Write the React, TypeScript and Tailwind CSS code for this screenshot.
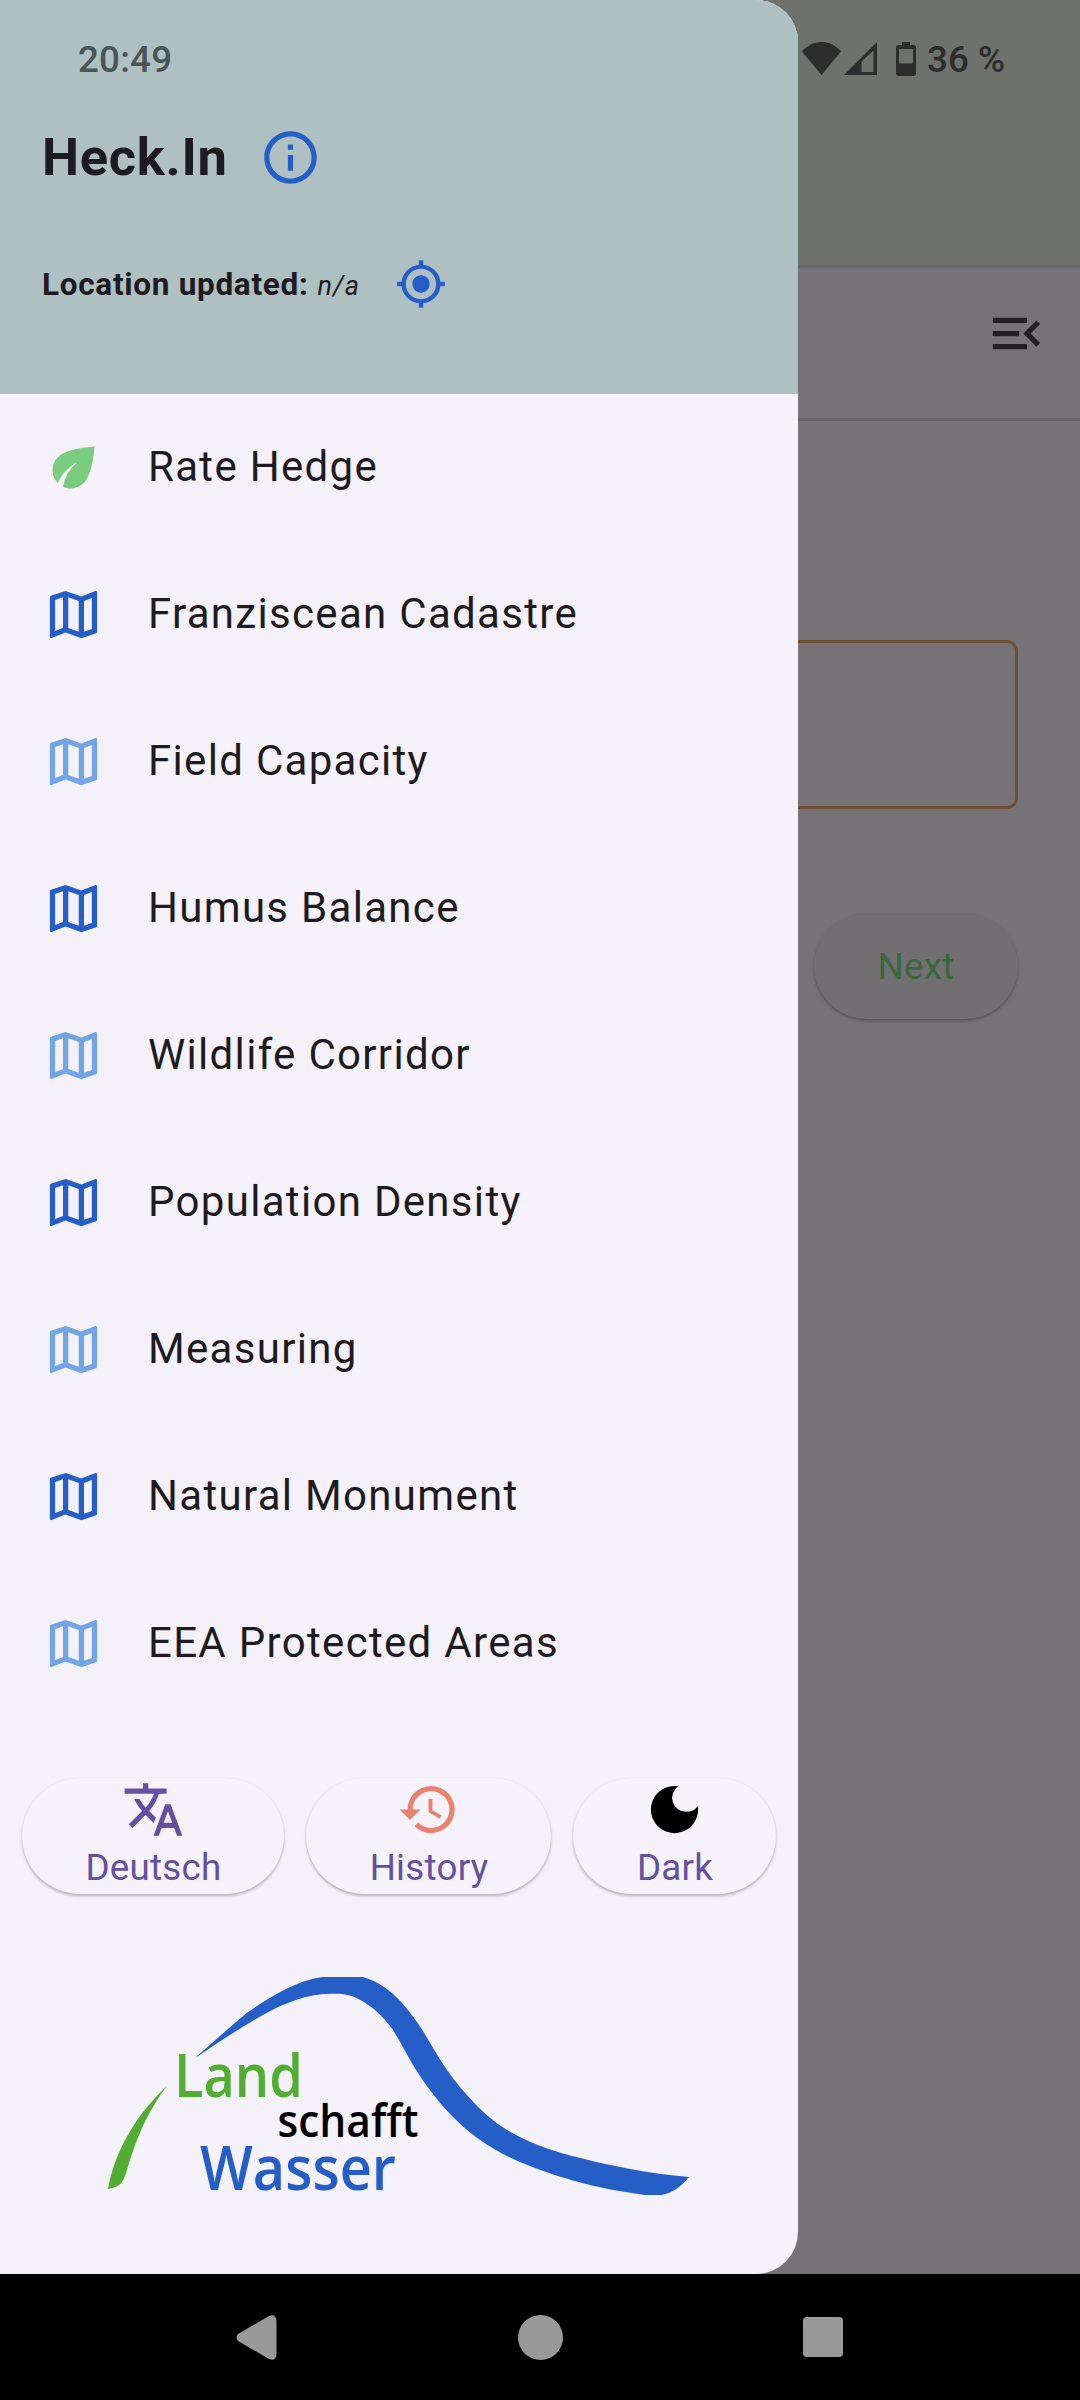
import { MdDarkMode, MdEco, MdHistory, MdMenuOpen, MdMyLocation, MdOutlineInfo, MdOutlineMap, MdTranslate } from "react-icons/md";
import type { ReactNode } from "react";

const layers = [
  "Franziscean Cadastre",
  "Field Capacity",
  "Humus Balance",
  "Wildlife Corridor",
  "Population Density",
  "Measuring",
  "Natural Monument",
  "EEA Protected Areas",
];

function DrawerItem({ icon, label }: { icon: ReactNode; label: string }) {
  return (
    <li className="flex h-[147px] items-center gap-[43px] pl-[42px]">
      {icon}
      <span className="pb-[2px] text-[42px] leading-[63px] tracking-[1.31px] whitespace-nowrap">{label}</span>
    </li>
  );
}

function PillButton({ icon, label, className }: { icon: ReactNode; label: string; className: string }) {
  return (
    <button
      className={
        "flex h-[116px] flex-col items-center rounded-full bg-[#f5f2fa] text-[#6450a0] shadow-[0_2px_3px_rgba(0,0,0,0.26),0_0_1px_rgba(0,0,0,0.08)] " +
        className
      }
    >
      {icon}
      <span className="mt-[4px] ml-px text-[36.75px] leading-[45px] tracking-[0.26px]">{label}</span>
    </button>
  );
}

function Logo() {
  return (
    <svg viewBox="108 1977 582 218" className="h-[218px] w-[582px]">
      <path
        fill="#265ec7"
        d="M195 2058C213 2042 230 2027 246.700 2013C270 1997 295 1981 322 1977L363 1977C373 1980 380 1984 387 1989C402 2001 412 2014 423 2031C437 2054 446 2072 467 2095C497 2130 528 2144 572 2156C607 2165 650 2174 689 2177C681 2187 672 2193 662 2195L645 2195C600 2189 567 2180 535 2168C480 2148 445 2117 413 2065C406 2053 400 2041 393 2030C381 2013 368 2003 353 1996.500C345 1993.500 338 1993.500 330 1993.700C307 1994 285 2003 266.700 2013C243 2026 222 2040 195 2058Z"
      />
      <path fill="#51ae32" d="M108 2189C113 2160 130 2120 167 2086C150 2108 139 2132 130 2160C127 2169 126 2176 122 2182C119 2186 114 2188 108 2189Z" />
      <g fontFamily="'Open Sans', 'Noto Sans', sans-serif" fontWeight="600">
        <text x="174" y="2096.500" fontSize="59" fill="#51ae32" textLength="129" lengthAdjust="spacingAndGlyphs">Land</text>
        <text x="277.500" y="2137" fontSize="46" fill="#000" textLength="141" lengthAdjust="spacingAndGlyphs">schafft</text>
        <text x="200" y="2189.500" fontSize="62" fill="#265ec7" textLength="196" lengthAdjust="spacingAndGlyphs">Wasser</text>
      </g>
    </svg>
  );
}

function StatusBar() {
  return (
    <div className="absolute inset-x-0 top-0 flex h-[117px] items-center justify-between pr-[75px] pl-[78px] text-[36.75px] font-medium">
      <span className="pt-[3px] tracking-[0.2px] text-[#4a5555]">20:49</span>
      <div className="flex items-center text-[#2d2d2d]">
        <svg viewBox="0 0 39 33" className="h-[33px] w-[39px]" fill="currentColor">
          <path d="M0 9.500C11-3.200 28-3.200 39 9.500L19.500 33Z" />
        </svg>
        <svg viewBox="0 0 33 33" className="ml-[3px] h-[33px] w-[33px]" fill="currentColor">
          <path fillRule="evenodd" d="M0 33L33 0V33ZM17.500 19.500V30H29.500V8.500Z" />
        </svg>
        <svg viewBox="0 0 20 34" className="ml-[19px] h-[34px] w-5" fill="currentColor">
          <path fillRule="evenodd" d="M6 0H14V3H17.500Q20 3 20 5.500V31.500Q20 34 17.500 34H2.500Q0 34 0 31.500V5.500Q0 3 2.500 3H6ZM3 7V21.500H17V7Z" />
        </svg>
        <span className="ml-[11px] pt-[2px]">36 %</span>
      </div>
    </div>
  );
}

export default function App() {
  return (
    <div className="relative flex h-[2400px] w-[1080px] flex-col overflow-hidden bg-[#757376] text-[#1d1b20] [font-family:Roboto,sans-serif]">
      <main className="flex flex-1 flex-col">
        <div className="h-[265px] bg-[#6e716c]" />
        <div className="flex h-[156px] items-center justify-end border-y-[3px] border-[#6a6768] pr-[32px]">
          <MdMenuOpen className="-mt-[19px] size-[63px] text-[#222024]" />
        </div>
        <div className="mt-[219px] mr-[62px] ml-[63px] h-[169px] rounded-[11px] border-[3px] border-[#6d5030]" />
        <button className="mt-[104px] mr-[62px] h-[106px] w-[204px] self-end rounded-full bg-[#716f72] pt-[2px] text-[36.75px] tracking-[0.26px] text-[#38683c] shadow-[0_2px_3px_rgba(0,0,0,0.26)]">
          Next
        </button>
      </main>

      <nav className="flex h-[126px] items-center bg-black pl-[236px]">
        <svg viewBox="0 0 41 45" className="h-[45px] w-[41px]" fill="#999">
          <path d="M2 19L33 1Q40-2 40.500 6V39Q40 47 33 44L2 26Q-1 22.500 2 19Z" />
        </svg>
        <div className="ml-[241px] size-[45px] rounded-full bg-[#999]" />
        <div className="ml-[240px] size-[40px] rounded-[4px] bg-[#999]" />
      </nav>

      <aside className="absolute top-0 left-0 flex h-[2274px] w-[798px] flex-col overflow-hidden rounded-r-[42px] bg-[#f4f1f9]">
        <header className="h-[394px] border-b border-[#abbfbd] bg-[#aec0c2] pt-[126px] pl-[42px]">
          <div className="flex h-[63px] items-center">
            <h1 className="w-[217px] text-[52.5px] font-bold tracking-[0.7px] whitespace-nowrap">Heck.In</h1>
            <MdOutlineInfo className="size-[63px] text-[#265ec7]" />
          </div>
          <div className="mt-[68px] flex h-[53px] items-center">
            <p className="w-[353px] pt-[2px] whitespace-nowrap">
              <b className="text-[31.5px] tracking-[0.7px]">Location updated:</b>
              <i className="ml-[9px] text-[27px] tracking-[1px]">n/a</i>
            </p>
            <MdMyLocation className="size-[52px] text-[#265ec7]" />
          </div>
        </header>

        <ul>
          <DrawerItem icon={<MdEco className="size-[63px] text-[#7acd7e]" />} label="Rate Hedge" />
          {layers.map((label, i) => (
            <DrawerItem
              key={label}
              icon={<MdOutlineMap className={i % 2 === 0 ? "size-[63px] text-[#265ec7]" : "size-[63px] text-[#72a5e6]"} />}
              label={label}
            />
          ))}
        </ul>

        <div className="mt-[61px] flex gap-[22px] pl-[22px]">
          <PillButton className="w-[262px]" icon={<MdTranslate className="size-[63px]" />} label="Deutsch" />
          <PillButton className="w-[245px]" icon={<MdHistory className="size-[63px] text-[#e7836e]" />} label="History" />
          <PillButton className="w-[203px]" icon={<MdDarkMode className="size-[63px] text-black" />} label="Dark" />
        </div>

        <div className="mt-[83px] pl-[108px]">
          <Logo />
        </div>
      </aside>

      <StatusBar />
    </div>
  );
}
